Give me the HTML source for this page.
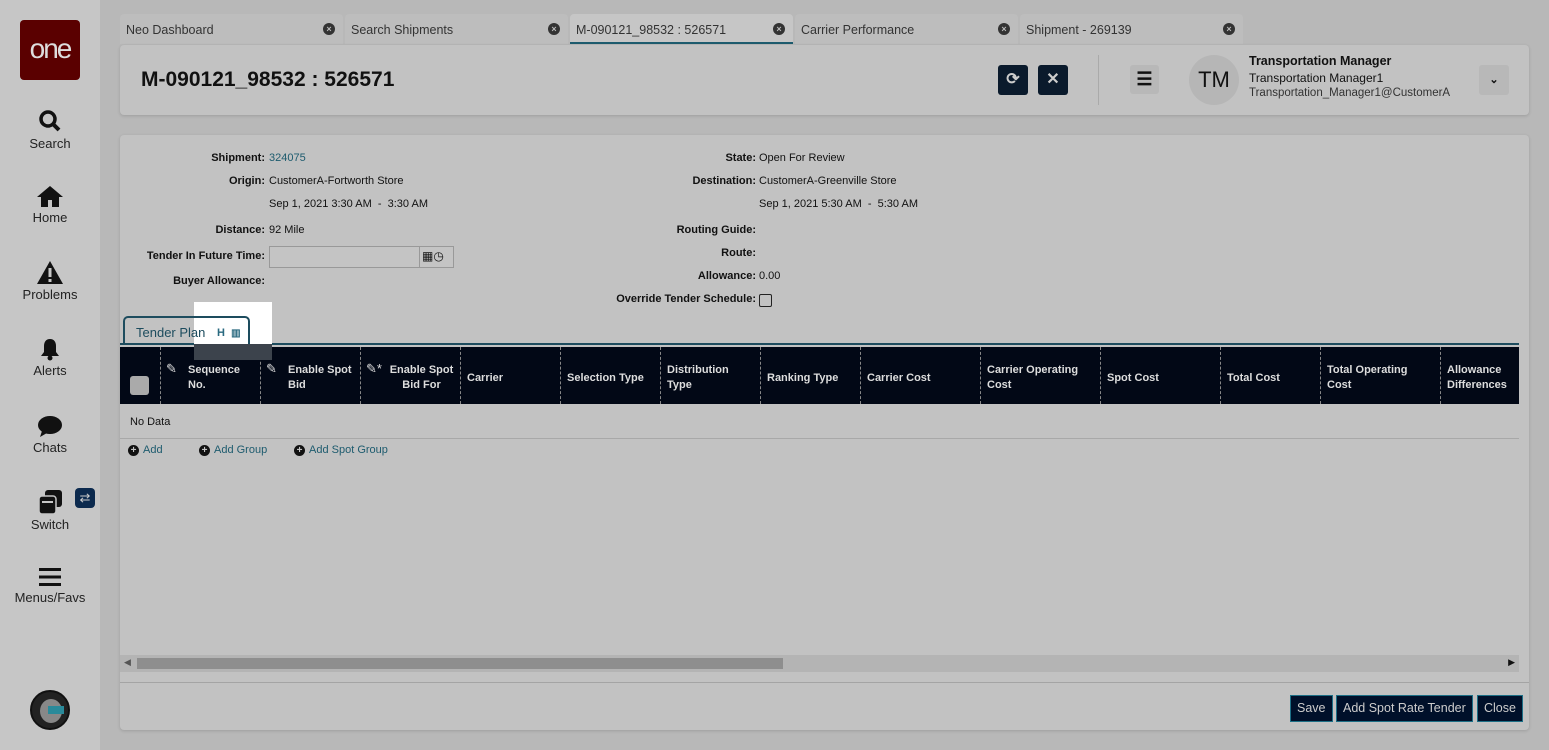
<!DOCTYPE html>
<html><head><style>
*{box-sizing:border-box;margin:0;padding:0}
body{width:1549px;height:750px;overflow:hidden;background:#b8b8b8;font-family:"Liberation Sans",sans-serif;position:relative;color:#111}
.sb{position:absolute;left:0;top:0;width:100px;height:750px;background:#c6c6c6}
.logo{position:absolute;left:20px;top:20px;width:60px;height:60px;background:#5a0000;border-radius:4px;color:#ddd;font-size:28px;text-align:center;line-height:58px;letter-spacing:-2px}
.ni{position:absolute;left:0;width:100px;text-align:center;font-size:13px;color:#222}
.ni svg{display:block;margin:0 auto 2px}
.tab{position:absolute;top:14px;height:30px;width:223px;background:#bdbdbd;border-radius:4px 4px 0 0;font-size:12.5px;color:#333;padding:9px 6px}
.tab .x{position:absolute;right:8px;top:9px;width:12px;height:12px;border-radius:50%;background:#333;color:#bdbdbd;font-size:9px;line-height:12px;text-align:center;font-weight:bold}
.card{position:absolute;background:#c2c2c2;border-radius:4px;box-shadow:0 1px 3px rgba(0,0,0,.15)}
.btn{position:absolute;width:30px;height:30px;background:#0a1a2c;border-radius:3px;color:#ccc;text-align:center;line-height:30px;font-weight:bold}
.lbl{position:absolute;font-size:11px;text-align:right;font-weight:bold}
.val{position:absolute;font-size:11px}
.th{position:absolute;top:347px;height:57px;background:#020816}
.hc{position:absolute;top:0;height:57px;border-left:1px dashed #888;color:#ddd;font-size:11px;font-weight:bold;padding:16px 6px 0;line-height:15px}
.ab{position:absolute;top:695px;height:27px;background:#00102a;border:1px solid #1c6f86;color:#ccc;font-size:12.5px;line-height:25px;padding:0 6px}
.add{position:absolute;top:444px;font-size:11px;color:#1d5b6e}
.add b{display:inline-block;width:11px;height:11px;border-radius:50%;background:#111;color:#c2c2c2;font-size:10px;line-height:11px;text-align:center;margin-right:4px}
</style></head><body>
<div class="sb">
<div class="logo">one</div>
<div class="ni" style="top:108px"><svg width="26" height="26" viewBox="0 0 26 26"><circle cx="11" cy="11" r="7" fill="none" stroke="#111" stroke-width="3.5"/><path d="M16 16l6 6" stroke="#111" stroke-width="4"/></svg>Search</div>
<div class="ni" style="top:184px"><svg width="28" height="24" viewBox="0 0 28 24"><path d="M14 2L1 13h4v10h7v-7h4v7h7V13h4z" fill="#111"/></svg>Home</div>
<div class="ni" style="top:260px"><svg width="28" height="25" viewBox="0 0 28 25"><path d="M14 1L1 24h26z" fill="#111"/><rect x="12.5" y="8" width="3" height="9" fill="#c6c6c6"/><rect x="12.5" y="19" width="3" height="3" fill="#c6c6c6"/></svg>Problems</div>
<div class="ni" style="top:337px"><svg width="24" height="24" viewBox="0 0 24 24"><path d="M12 2c-4 0-6 3-6 7v6l-3 4h18l-3-4V9c0-4-2-7-6-7z" fill="#111"/><circle cx="12" cy="21" r="2.5" fill="#111"/></svg>Alerts</div>
<div class="ni" style="top:414px"><svg width="26" height="24" viewBox="0 0 26 24"><ellipse cx="13" cy="11" rx="12" ry="9" fill="#111"/><path d="M5 17l-2 6 7-4z" fill="#111"/></svg>Chats</div>
<div class="ni" style="top:489px"><svg width="26" height="26" viewBox="0 0 26 26"><rect x="8" y="1" width="17" height="17" rx="3" fill="#111"/><rect x="2" y="7" width="17" height="18" rx="3" fill="#111" stroke="#c6c6c6" stroke-width="1.5"/><rect x="5" y="12" width="11" height="2" fill="#c6c6c6"/></svg>Switch</div>
<div style="position:absolute;left:75px;top:488px;width:20px;height:20px;background:#0c2a4e;border-radius:4px;color:#ccc;font-size:13px;text-align:center;line-height:20px">⇄</div>
<div class="ni" style="top:566px"><svg width="24" height="22" viewBox="0 0 24 22"><rect x="1" y="2" width="22" height="3" fill="#111"/><rect x="1" y="9.5" width="22" height="3" fill="#111"/><rect x="1" y="17" width="22" height="3" fill="#111"/></svg>Menus/Favs</div>
<div style="position:absolute;left:30px;top:690px;width:40px;height:40px;border-radius:50%;background:#222;border:2px solid #111"><div style="position:absolute;left:8px;top:7px;width:22px;height:24px;border-radius:50%;background:#888"></div><div style="position:absolute;left:16px;top:14px;width:16px;height:8px;background:#2a8a9a"></div></div>
</div>

<div class="tab" style="left:120px">Neo Dashboard<span class="x">×</span></div>
<div class="tab" style="left:345px">Search Shipments<span class="x">×</span></div>
<div class="tab" style="left:570px;background:#c6c6c6;border-bottom:2px solid #1d5b6e">M-090121_98532 : 526571<span class="x">×</span></div>
<div class="tab" style="left:795px">Carrier Performance<span class="x">×</span></div>
<div class="tab" style="left:1020px">Shipment - 269139<span class="x">×</span></div>

<div class="card" style="left:120px;top:45px;width:1409px;height:70px">
<div style="position:absolute;left:21px;top:23px;font-size:21px;font-weight:bold">M-090121_98532 : 526571</div>
<div class="btn" style="left:878px;top:20px">⟳</div>
<div class="btn" style="left:918px;top:20px">✕</div>
<div style="position:absolute;left:978px;top:10px;width:1px;height:50px;background:#aaa"></div>
<div style="position:absolute;left:1010px;top:20px;width:29px;height:29px;background:#b8b8b8;border-radius:3px;font-size:18px;font-weight:bold;text-align:center;line-height:28px">☰</div>
<div style="position:absolute;left:1069px;top:10px;width:50px;height:50px;background:#b6b6b6;border-radius:50%;font-size:22px;text-align:center;line-height:50px">TM</div>
<div style="position:absolute;left:1129px;top:9px;font-size:12.5px;font-weight:bold">Transportation Manager</div>
<div style="position:absolute;left:1129px;top:26px;font-size:12px">Transportation Manager1</div>
<div style="position:absolute;left:1129px;top:42px;font-size:11.5px;color:#333">Transportation_Manager1@CustomerA</div>
<div style="position:absolute;left:1359px;top:20px;width:30px;height:30px;background:#b8b8b8;border-radius:3px;text-align:center;line-height:30px;font-size:11px;font-weight:bold">⌄</div>
</div>

<div class="card" style="left:120px;top:135px;width:1409px;height:595px"></div>
<div class="lbl" style="left:130px;width:135px;top:152px">Shipment:</div><div class="val" style="left:269px;top:152px;color:#1d5b6e">324075</div>
<div class="lbl" style="left:130px;width:135px;top:175px">Origin:</div><div class="val" style="left:269px;top:175px">CustomerA-Fortworth Store</div>
<div class="val" style="left:269px;top:198px">Sep 1, 2021 3:30 AM &nbsp;- &nbsp;3:30 AM</div>
<div class="lbl" style="left:130px;width:135px;top:224px">Distance:</div><div class="val" style="left:269px;top:224px">92 Mile</div>
<div class="lbl" style="left:130px;width:135px;top:250px">Tender In Future Time:</div>
<div style="position:absolute;left:269px;top:246px;width:185px;height:22px;border:1px solid #999;background:#c4c4c4"><div style="position:absolute;left:149px;top:0;width:1px;height:20px;background:#999"></div><span style="position:absolute;left:152px;top:2px;font-size:12px">▦◷</span></div>
<div class="lbl" style="left:130px;width:135px;top:275px">Buyer Allowance:</div>
<div class="lbl" style="left:560px;width:196px;top:152px">State:</div><div class="val" style="left:759px;top:152px">Open For Review</div>
<div class="lbl" style="left:560px;width:196px;top:175px">Destination:</div><div class="val" style="left:759px;top:175px">CustomerA-Greenville Store</div>
<div class="val" style="left:759px;top:198px">Sep 1, 2021 5:30 AM &nbsp;- &nbsp;5:30 AM</div>
<div class="lbl" style="left:560px;width:196px;top:224px">Routing Guide:</div>
<div class="lbl" style="left:560px;width:196px;top:247px">Route:</div>
<div class="lbl" style="left:560px;width:196px;top:270px">Allowance:</div><div class="val" style="left:759px;top:270px">0.00</div>
<div class="lbl" style="left:560px;width:196px;top:293px">Override Tender Schedule:</div>
<div style="position:absolute;left:759px;top:294px;width:13px;height:13px;border:1px solid #222;border-radius:2px"></div>

<div style="position:absolute;left:123px;top:316px;width:117px;height:30px;border-radius:5px 5px 0 0;background:#c2c2c2"></div>
<div style="position:absolute;left:120px;top:343px;width:1399px;height:2px;background:#1d4c5e"></div>
<div class="th" style="left:120px;width:1399px">
<div style="position:absolute;left:10px;top:29px;width:19px;height:19px;background:#aaa;border-radius:3px"></div>
<div class="hc" style="left:40px;width:100px;padding-left:27px">Sequence<br>No.</div>
<div class="hc" style="left:140px;width:100px;padding-left:27px">Enable Spot<br>Bid</div>
<div class="hc" style="left:240px;width:100px;padding-left:28px;text-align:center">Enable Spot<br>Bid For</div>
<div class="hc" style="left:340px;width:100px;padding-top:24px">Carrier</div>
<div class="hc" style="left:440px;width:100px;padding-top:24px">Selection Type</div>
<div class="hc" style="left:540px;width:100px">Distribution<br>Type</div>
<div class="hc" style="left:640px;width:100px;padding-top:24px">Ranking Type</div>
<div class="hc" style="left:740px;width:120px;padding-top:24px">Carrier Cost</div>
<div class="hc" style="left:860px;width:120px">Carrier Operating<br>Cost</div>
<div class="hc" style="left:980px;width:120px;padding-top:24px">Spot Cost</div>
<div class="hc" style="left:1100px;width:100px;padding-top:24px">Total Cost</div>
<div class="hc" style="left:1200px;width:120px">Total Operating<br>Cost</div>
<div class="hc" style="left:1320px;width:79px">Allowance<br>Differences</div>
<span style="position:absolute;left:46px;top:14px;color:#ddd;font-size:13px">✎</span>
<span style="position:absolute;left:146px;top:14px;color:#ddd;font-size:13px">✎</span>
<span style="position:absolute;left:246px;top:14px;color:#ddd;font-size:13px">✎*</span>
</div>
<div style="position:absolute;left:194px;top:302px;width:78px;height:42px;background:#fff"></div>
<div style="position:absolute;left:194px;top:344px;width:78px;height:16px;background:#3c434c"></div>
<div style="position:absolute;left:123px;top:316px;width:127px;height:28px;border:2px solid #1d4c5e;border-bottom:none;border-radius:5px 5px 0 0;font-size:13px;color:#1d4c5e;padding:7px 11px;white-space:nowrap">Tender Plan</div>
<div style="position:absolute;left:217px;top:327px;font-size:11px;font-weight:bold;color:#2a6a80">H &nbsp;<span style="font-size:10px">▥</span></div>

<div class="val" style="left:130px;top:416px">No Data</div>
<div style="position:absolute;left:120px;top:438px;width:1399px;height:1px;background:#a8a8a8"></div>
<div class="add" style="left:128px"><b>+</b>Add</div>
<div class="add" style="left:199px"><b>+</b>Add Group</div>
<div class="add" style="left:294px"><b>+</b>Add Spot Group</div>

<div style="position:absolute;left:120px;top:655px;width:1399px;height:17px;background:#b4b4b4"><div style="position:absolute;left:17px;top:3px;width:646px;height:11px;background:#8e8e8e"></div><span style="position:absolute;left:4px;top:2px;font-size:9px;color:#555">◀</span><span style="position:absolute;right:4px;top:2px;font-size:9px;color:#111">▶</span></div>
<div style="position:absolute;left:120px;top:682px;width:1409px;height:1px;background:#a4a4a4"></div>
<div class="ab" style="left:1290px">Save</div>
<div class="ab" style="left:1336px">Add Spot Rate Tender</div>
<div class="ab" style="left:1477px">Close</div>
</body></html>
